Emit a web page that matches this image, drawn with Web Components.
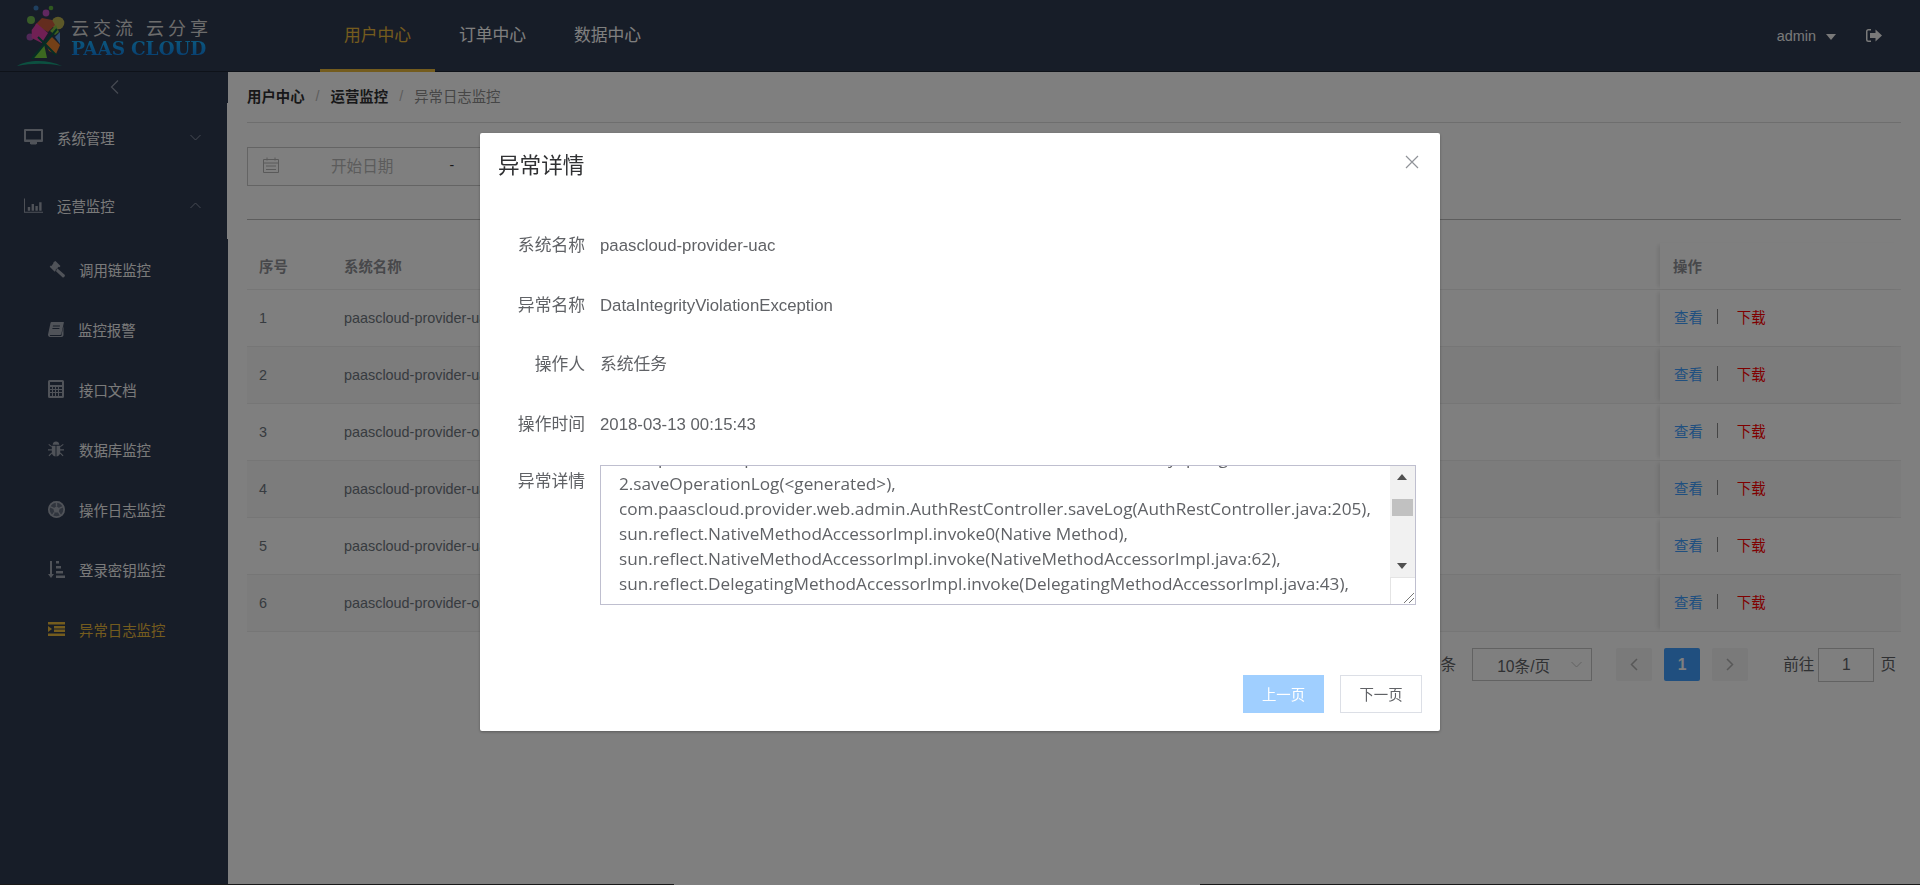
<!DOCTYPE html>
<html lang="zh">
<head>
<meta charset="utf-8">
<title>异常日志监控</title>
<style>
  html, body { margin: 0; height: 100%; overflow: hidden; }
  body {
    display: flex;
    flex-direction: column;
    background: #fff;
    font-family: "Liberation Sans", "Noto Sans CJK SC", sans-serif;
  }
  .shell { flex: 1; display: flex; min-height: 0; }
  .edge { height: 1px; flex: none; background: linear-gradient(90deg, #333 674px, #fff 674px, #fff 1200px, #333 1200px); }
</style>
</head>
<body>
<app-header></app-header>
<div class="shell">
  <app-sidebar>
    <side-item top icon="desktop" arrow="down" gap="14">系统管理</side-item>
    <side-item top icon="chart" arrow="up" gap="14">运营监控</side-item>
    <side-item icon="gavel" gap="14">调用链监控</side-item>
    <side-item icon="book" gap="14">监控报警</side-item>
    <side-item icon="calc" gap="15">接口文档</side-item>
    <side-item icon="bug" gap="15">数据库监控</side-item>
    <side-item icon="ball" gap="14">操作日志监控</side-item>
    <side-item icon="sort" gap="14">登录密钥监控</side-item>
    <side-item icon="indent" gap="14" active>异常日志监控</side-item>
  </app-sidebar>
  <log-page>
    <log-row index="1" system="paascloud-provider-uac"></log-row>
    <log-row index="2" system="paascloud-provider-uac" striped></log-row>
    <log-row index="3" system="paascloud-provider-omc"></log-row>
    <log-row index="4" system="paascloud-provider-uac" striped></log-row>
    <log-row index="5" system="paascloud-provider-uac"></log-row>
    <log-row index="6" system="paascloud-provider-omc" striped></log-row>
  </log-page>
</div>
<div class="edge"></div>
<modal-mask></modal-mask>
<detail-dialog heading="异常详情">
  <form-line label="系统名称">paascloud-provider-uac</form-line>
  <form-line label="异常名称">DataIntegrityViolationException</form-line>
  <form-line label="操作人">系统任务</form-line>
  <form-line label="操作时间">2018-03-13 00:15:43</form-line>
  <form-line label="异常详情" top>
    <fake-textarea>
      <div>com.paascloud.provider.web.admin.AuthRestController$$FastClassBySpringCGLIB$$e7b5a</div>
      <div>2.saveOperationLog(&lt;generated&gt;),</div>
      <div>com.paascloud.provider.web.admin.AuthRestController.saveLog(AuthRestController.java:205),</div>
      <div>sun.reflect.NativeMethodAccessorImpl.invoke0(Native Method),</div>
      <div>sun.reflect.NativeMethodAccessorImpl.invoke(NativeMethodAccessorImpl.java:62),</div>
      <div>sun.reflect.DelegatingMethodAccessorImpl.invoke(DelegatingMethodAccessorImpl.java:43),</div>
      <div>java.lang.reflect.Method.invoke(Method.java:498),</div>
    </fake-textarea>
  </form-line>
</detail-dialog>

<script>
const ICONS = {
  desktop: '<svg width="19" height="16" viewBox="0 0 19 16"><path fill-rule="evenodd" d="M1 0h17a1 1 0 0 1 1 1v11a1 1 0 0 1-1 1H1a1 1 0 0 1-1-1V1a1 1 0 0 1 1-1zM2 2v8.500h15V2z"/><path d="M6 13h7v1.500l-1 1H7l-1-1z"/></svg>',
  chart: '<svg width="19" height="15" viewBox="0 0 20 15"><path d="M0 0h1v14h19v1H0z"/><path d="M4 9h2.500v4H4zM8 6h2.500v7H8zM12 8h2.500v5H12zM16 4h2.500v9H16z"/></svg>',
  gavel: '<svg width="17" height="17" viewBox="0 0 17 17"><path d="M7.500 0l5 5-1.200 1.200-.6-.4-3.200 3.200.4.600-1.200 1.200-5-5 1.200-1.200.6.400L5.700 1.800l-.4-.6z"/><path d="M9.200 7.200l7.200 6.300c.7.600.7 1.400.1 2.100l-.3.400c-.6.600-1.400.6-2-.1L8 10.200z"/></svg>',
  book: '<svg width="16" height="15" viewBox="0 0 16 15"><path fill-rule="evenodd" d="M3.500 0h12c.4 0 .5.300.4.600L13.300 12c-.2.700-.7 1.100-1.400 1.100H2.700c-.7 0-1 .5-.7 1h10.800c.3 0 .5-.2.600-.4L15.500 4v9c0 1.100-.9 2-2 2H2C.8 15 0 14 0 12.800c0-.4.100-.8.200-1.100L2.500 1C2.700.4 3 0 3.500 0zM5 3.500l-.2 1h7l.2-1zM4.500 6l-.2 1h7l.2-1z"/></svg>',
  calc: '<svg width="16" height="18" viewBox="0 0 16 18"><path fill-rule="evenodd" d="M1.500 0h13A1.500 1.500 0 0 1 16 1.500v15a1.500 1.500 0 0 1-1.500 1.500h-13A1.500 1.500 0 0 1 0 16.500v-15A1.500 1.500 0 0 1 1.500 0zM2 2v3h12V2zM2 7v2h2V7zm3 0v2h2V7zm3 0v2h2V7zm3 0v2h3V7zM2 10v2h2v-2zm3 0v2h2v-2zm3 0v2h2v-2zm3 0v2h3v-2zM2 13v3h2v-3zm3 0v3h2v-3zm3 0v3h2v-3zm3 0v3h3v-3z"/></svg>',
  bug: '<svg width="16" height="16" viewBox="0 0 16 16"><path d="M4.700 3.800C4.700 1.700 6.200.5 8 .5s3.300 1.200 3.300 3.300z"/><path d="M3.800 4.800h3.700V15.500C5 15.200 3.800 13.300 3.800 11zM8.500 4.800h3.700V11c0 2.300-1.200 4.200-3.700 4.500z"/><path d="M1 3l3 2.200-.6.800-3-2.200zM15 3l-3 2.200.6.800 3-2.200zM0 8.300h4v1.200H0zM12 8.300h4v1.200h-4zM.5 14.500l3-3 .8.800-3 3zM15.500 14.500l-3-3-.8.800 3 3z"/></svg>',
  ball: '<svg width="17" height="17" viewBox="0 0 17 17"><circle cx="8.500" cy="8.500" r="8.500" fill-opacity=".45"/><path fill-rule="evenodd" d="M8.500 0a8.500 8.500 0 1 1 0 17 8.500 8.500 0 0 1 0-17zm0 1.700a6.800 6.800 0 1 0 0 13.600 6.800 6.800 0 0 0 0-13.600z"/><path d="M8.500 5.200l3.300 2.400-1.300 3.900h-4L5.200 7.600zM7.800 1h1.400v4.200H7.800zM1.500 6.200l.4-1.300 3.900 1.700-.4 1.300zM15.500 6.200l-.4-1.300-3.900 1.700.4 1.300zM3.700 14.200l1.100.8 2.400-3.700-1.100-.8zM13.300 14.200l-1.100.8-2.400-3.700 1.100-.8z"/></svg>',
  sort: '<svg width="17" height="17" viewBox="0 0 17 17"><path d="M2 0h2v13h2l-3 4-3-4h2zM8 0h3v2.500H8zM8 5h5v2.500H8zM8 10h7v2.500H8zM8 14.500h9V17H8z"/></svg>',
  indent: '<svg width="17" height="14" viewBox="0 0 17 14"><path d="M0 0h17v2.500H0zM6 4h11v2.500H6zM6 7.500h11V10H6zM0 11.500h17V14H0zM0 4l4 3-4 3z"/></svg>',
  logout: '<svg width="16" height="13" viewBox="0 0 16 13"><path d="M5 0v1.500H2.500c-.6 0-1 .4-1 1v8c0 .6.4 1 1 1H5V13H2.500A2.500 2.500 0 0 1 0 10.500v-8A2.500 2.500 0 0 1 2.500 0z"/><path d="M9.500 0.500L16 6.500l-6.500 6V9H4V4h5.500z"/></svg>'
};

const BASE = '#2f3a50';
const GOLD = '#e8b83c';

const chevron = (d, c) => `<svg width="11" height="7" viewBox="0 0 11 7" fill="none" stroke="${c}" stroke-width="1"><path d="${d}"/></svg>`;

class AppHeader extends HTMLElement {
  constructor() {
    super();
    this.attachShadow({ mode: 'open' });
    this.shadowRoot.innerHTML = `
      <style>
        :host { display: flex; height: 72px; flex: none; background: ${BASE}; color: #fff; box-sizing: border-box; border-bottom: 1px solid #1d2432; }
        .logo { width: 320px; flex: none; display: flex; padding: 5px 0 0 15px; box-sizing: border-box; }
        .logo-text { display: flex; flex-direction: column; padding-top: 13px; }
        .slogan { display: flex; gap: 9px; font-size: 18px; line-height: 22px; letter-spacing: 4px; color: #d8d8d8; }
        .brand { font: bold 18.500px/20px "DejaVu Serif", serif; letter-spacing: -0.2px; margin-top: -1px; white-space: nowrap; color: #1490f0; background: linear-gradient(180deg, #18b4ff, #0f78e0); -webkit-background-clip: text; background-clip: text; -webkit-text-fill-color: transparent; }
        nav { display: flex; }
        nav a { width: 115px; height: 72px; box-sizing: border-box; text-align: center; font-size: 16.800px; line-height: 71px; margin-bottom: -1px; }
        nav a.on { color: ${GOLD}; border-bottom: 3px solid ${GOLD}; }
        .user { margin-left: auto; display: flex; align-items: center; font-size: 14.400px; padding-right: 38px; color: #f2f2f2; }
        .caret { width: 0; height: 0; border: 5px solid transparent; border-top: 6px solid #f2f2f2; border-bottom: 0; margin: 2px 30px 0 10px; }
        .user svg { fill: #f2f2f2; }
      </style>
      <div class="logo">
        <svg width="56" height="62" viewBox="0 0 56 62">
          <circle cx="21" cy="3" r="2.500" fill="#3f80c0"/><circle cx="36" cy="3" r="2.300" fill="#5fb040"/>
          <circle cx="31" cy="8" r="3.400" fill="#c050c0"/><circle cx="16" cy="15" r="4" fill="#70b850"/>
          <circle cx="43" cy="18" r="6.300" fill="#b8b050"/><circle cx="15" cy="32" r="3.500" fill="#a050b0"/>
          <path d="M20 20l7-7 10 2 3 5-7 7z" fill="#c85a3c"/>
          <path d="M21.700 18.300L33 28l-6.300 10-10-5v-8z" fill="#e040a8"/>
          <path d="M35 26l6-6 3 7-4 3z" fill="#80c040"/>
          <path d="M30 37l7-5 8 8-4 9-7-3z" fill="#e88030"/>
          <path d="M40 32l5-5 0 12z" fill="#5a9ae0"/>
          <path d="M17 53l12-14 3 14z" fill="#78d040"/>
          <path d="M17 54L42 24M23 32l18 18" stroke="#0c5a48" stroke-width="2" fill="none"/>
          <path d="M2 61c10-6 30-7 45 0-14-3-30-3-45 0z" fill="#18a080"/>
        </svg>
        <div class="logo-text">
          <div class="slogan"><span>云交流</span><span>云分享</span></div>
          <div class="brand">PAAS CLOUD</div>
        </div>
      </div>
      <nav><a class="on">用户中心</a><a>订单中心</a><a>数据中心</a></nav>
      <div class="user">admin<span class="caret"></span>${ICONS.logout}</div>
    `;
  }
}

class AppSidebar extends HTMLElement {
  constructor() {
    super();
    this.attachShadow({ mode: 'open' });
    this.shadowRoot.innerHTML = `
      <style>
        :host { display: flex; flex-direction: column; width: 228px; flex: none; background: ${BASE}; }
        .collapse { height: 31px; display: flex; justify-content: center; align-items: flex-start; padding: 8px 0 0 0; box-sizing: border-box; }
      </style>
      <div class="collapse"><svg width="9" height="14" viewBox="0 0 9 14" fill="none" stroke="#8c94a4" stroke-width="1.200"><path d="M8 .5L1.500 7 8 13.500"/></svg></div>
      <slot></slot>
    `;
  }
}

class SideItem extends HTMLElement {
  constructor() {
    super();
    this.attachShadow({ mode: 'open' });
    const top = this.hasAttribute('top');
    const gap = this.getAttribute('gap') || '14';
    const arrow = this.getAttribute('arrow');
    const arrowPath = arrow === 'up' ? 'M.5 6L5.500 1l5 5' : 'M.5 1l5 5 5-5';
    this.shadowRoot.innerHTML = `
      <style>
        :host { display: flex; align-items: center; height: ${top ? 68 : 60}px; box-sizing: border-box; padding-left: ${top ? 24 : 48}px; gap: ${gap}px; font-size: 14.400px; color: #f4f4f4; }
        :host([top]) { border-right: 1px solid #fff; }
        :host([active]) { color: ${GOLD}; }
        .icon { display: flex; fill: #a0a6b2; }
        :host([active]) .icon { fill: ${GOLD}; }
        .arrow { display: flex; margin-left: auto; margin-right: 26px; }
      </style>
      <span class="icon">${ICONS[this.getAttribute('icon')]}</span>
      <span><slot></slot></span>
      ${arrow ? `<span class="arrow">${chevron(arrowPath, '#8c94a4')}</span>` : ''}
    `;
  }
}

class LogPage extends HTMLElement {
  constructor() {
    super();
    this.attachShadow({ mode: 'open' });
    this.shadowRoot.innerHTML = `
      <style>
        :host { display: flex; flex-direction: column; flex: 1; min-width: 0; padding: 0 19px; box-sizing: border-box; font-size: 14.400px; }
        .crumb { height: 51px; box-sizing: border-box; border-bottom: 1px solid #ddd; display: flex; align-items: center; padding-bottom: 3px; color: #8c8c8c; flex: none; }
        .crumb b { color: #303133; }
        .crumb i { font-style: normal; margin: 0 11px; color: #bbb; }
        .filter { margin-top: 24px; height: 39px; width: 300px; box-sizing: border-box; border: 1px solid #c8c8c8; display: flex; align-items: center; padding: 0 0 3px 15px; flex: none; font-size: 15.600px; color: #b8b8b8; }
        .filter svg { fill: none; stroke: #b4b4b4; margin-right: 52px; }
        .filter em { font-style: normal; color: #333; margin-left: 56px; font-size: 14px; }
        .rule { margin-top: 33px; border-top: 1px solid #bbb; flex: none; }
        .head { margin-top: 23px; height: 47px; display: grid; grid-template-columns: 85px 1fr 241px; box-sizing: border-box; border-bottom: 1px solid #ececec; font-weight: bold; color: #8f9196; align-items: center; flex: none; }
        .head span:first-child, .head span:nth-child(2) { padding: 0 0 2px 12px; }
        .head span:last-child { padding: 0 0 2px 13px; align-self: stretch; display: flex; align-items: center; box-shadow: -4px 0 4px -2px rgba(0,0,0,.1); }
        .pager { margin-top: 16px; display: flex; align-items: flex-start; justify-content: flex-end; padding-right: 5px; color: #606266; font-size: 15.600px; flex: none; }
        .select { width: 120px; height: 33px; box-sizing: border-box; border: 1px solid #c4c4c4; margin: 0 24px 0 16px; display: flex; align-items: center; padding-left: 24px; }
        .select svg { margin-left: auto; margin-right: 9px; }
        .btn { width: 36px; height: 33px; border-radius: 2px; background: #f4f4f5; display: flex; align-items: center; justify-content: center; margin-right: 12px; }
        .btn.on { background: #409eff; color: #fff; font-weight: bold; }
        .go { margin-left: 23px; line-height: 33px; }
        .num { width: 56px; height: 34px; box-sizing: border-box; border: 1px solid #c4c4c4; margin: 0 6px 0 4px; text-align: center; line-height: 32px; }
      </style>
      <div class="crumb"><b>用户中心</b><i>/</i><b>运营监控</b><i>/</i><span>异常日志监控</span></div>
      <div class="filter">
        <svg width="16" height="16" viewBox="0 0 16 16"><path d="M.5 2.500h15v13H.5zM.5 6h15M4 .5v3M12 .5v3M3 9h10M3 12.500h10"/></svg>
        <span>开始日期</span><em>-</em>
      </div>
      <div class="rule"></div>
      <div class="head"><span>序号</span><span>系统名称</span><span>操作</span></div>
      <slot></slot>
      <div class="pager">
        <span style="line-height:33px">共 6 条</span>
        <div class="select"><span>10条/页</span>${chevron('M.5 1l5 5 5-5', '#c4c4c4')}</div>
        <div class="btn"><svg width="8" height="13" viewBox="0 0 8 13" fill="none" stroke="#b0b0b0" stroke-width="1.500"><path d="M7 1L1.500 6.500 7 12"/></svg></div>
        <div class="btn on">1</div>
        <div class="btn"><svg width="8" height="13" viewBox="0 0 8 13" fill="none" stroke="#b0b0b0" stroke-width="1.500"><path d="M1 1l5.500 5.500L1 12"/></svg></div>
        <span class="go">前往</span><div class="num">1</div><span class="go" style="margin-left:0">页</span>
      </div>
    `;
  }
}

class LogRow extends HTMLElement {
  constructor() {
    super();
    this.attachShadow({ mode: 'open' });
    this.shadowRoot.innerHTML = `
      <style>
        :host { display: grid; grid-template-columns: 85px 1fr 241px; height: 57px; box-sizing: border-box; border-bottom: 1px solid #ececec; align-items: center; color: #6f7780; flex: none; }
        :host([striped]) { background: #f8f8f8; }
        span { padding-left: 12px; }
        .ops { padding: 0 0 3px 14px; align-self: stretch; display: flex; align-items: center; box-shadow: -4px 0 4px -2px rgba(0,0,0,.1); }
        .view { color: #409eff; }
        .sep { width: 1px; height: 15px; background: #8a8a8a; margin: 0 19px 0 14px; padding: 0; }
        .down { color: #f00; }
      </style>
      <span>${this.getAttribute('index')}</span>
      <span>${this.getAttribute('system')}</span>
      <div class="ops"><a class="view">查看</a><span class="sep"></span><a class="down">下载</a></div>
    `;
  }
}

class ModalMask extends HTMLElement {
  constructor() {
    super();
    this.attachShadow({ mode: 'open' });
    this.shadowRoot.innerHTML = `
      <style>
        :host { display: block; position: fixed; inset: 0; background: rgba(0,0,0,.5); }
      </style>
    `;
  }
}

class DetailDialog extends HTMLElement {
  constructor() {
    super();
    this.attachShadow({ mode: 'open' });
    this.shadowRoot.innerHTML = `
      <style>
        :host { display: flex; flex-direction: column; position: fixed; left: 480px; top: 133px; width: 960px; height: 598px; box-sizing: border-box; background: #fff; border-radius: 2px; box-shadow: 0 1px 3px rgba(0,0,0,.3); color: #606266; }
        .title { display: flex; justify-content: space-between; padding: 20px 21px 0 18px; font-size: 21.600px; line-height: 26px; color: #303133; height: 91px; box-sizing: border-box; flex: none; }
        .close { display: flex; padding-top: 2px; }
        .body { flex: 1; }
        .foot { display: flex; justify-content: flex-end; gap: 16px; padding: 0 18px 18px 0; flex: none; }
        .foot div { height: 38px; box-sizing: border-box; font-size: 14.400px; padding-bottom: 2px; display: flex; align-items: center; justify-content: center; }
        .prev { width: 81px; background: #a0cfff; color: #fff; }
        .next { width: 82px; border: 1px solid #dcdfe6; }
      </style>
      <div class="title"><span>${this.getAttribute('heading')}</span>
        <span class="close"><svg width="14" height="14" viewBox="0 0 14 14" stroke="#909399" stroke-width="1.200"><path d="M1 1l12 12M13 1L1 13"/></svg></span>
      </div>
      <div class="body"><slot></slot></div>
      <div class="foot"><div class="prev">上一页</div><div class="next">下一页</div></div>
    `;
  }
}

class FormLine extends HTMLElement {
  constructor() {
    super();
    this.attachShadow({ mode: 'open' });
    this.shadowRoot.innerHTML = `
      <style>
        :host { display: flex; min-height: 43px; margin-bottom: 16.600px; font-size: 16.800px; line-height: 43px; }
        :host([top]) label { line-height: 40px; }
        label { width: 105px; text-align: right; flex: none; margin-right: 15px; }
      </style>
      <label>${this.getAttribute('label')}</label>
      <div><slot></slot></div>
    `;
  }
}

class FakeTextarea extends HTMLElement {
  constructor() {
    super();
    this.attachShadow({ mode: 'open' });
    this.shadowRoot.innerHTML = `
      <style>
        :host { display: block; position: relative; width: 816px; height: 140px; box-sizing: border-box; border: 1px solid #bfbfcf; overflow: hidden; font: 17.200px/25.200px "Open Sans", "Noto Sans CJK SC", sans-serif; color: #606266; margin-top: 3px; }
        .text { margin-top: -21px; padding-left: 18px; white-space: nowrap; }
        .bar { position: absolute; top: 0; right: 0; bottom: 0; width: 25px; background: #fff; }
        .track { height: 112px; background: #f1f1f1; position: relative; }
        .up, .dn { position: absolute; left: 7px; width: 0; height: 0; border: 5.500px solid transparent; }
        .up { top: 8px; border-bottom: 6px solid #505050; border-top: 0; }
        .dn { bottom: 9px; border-top: 6px solid #505050; border-bottom: 0; }
        .thumb { position: absolute; left: 2px; right: 2px; top: 33px; height: 17px; background: #c1c1c1; }
        .corner { position: absolute; left: 0; right: 0; bottom: 0; height: 26px; border-top: 1px solid #e4e4e4; border-left: 1px solid #e4e4e4; display: flex; align-items: flex-end; justify-content: flex-end; }
      </style>
      <div class="text"><slot></slot></div>
      <div class="bar">
        <div class="track"><span class="up"></span><span class="thumb"></span><span class="dn"></span></div>
        <div class="corner"><svg width="14" height="14" viewBox="0 0 14 14" stroke="#777"><path d="M13 3L3 13M13 8l-5 5"/></svg></div>
      </div>
    `;
  }
}

customElements.define('app-header', AppHeader);
customElements.define('app-sidebar', AppSidebar);
customElements.define('side-item', SideItem);
customElements.define('log-page', LogPage);
customElements.define('log-row', LogRow);
customElements.define('modal-mask', ModalMask);
customElements.define('detail-dialog', DetailDialog);
customElements.define('form-line', FormLine);
customElements.define('fake-textarea', FakeTextarea);
</script>
</body>
</html>
